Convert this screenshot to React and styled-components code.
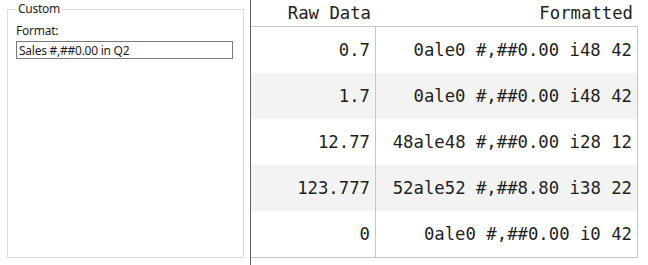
import React from 'react'
import styled, { createGlobalStyle } from 'styled-components'

const GlobalStyle = createGlobalStyle`
  html, body {
    margin: 0;
    padding: 0;
    background: #fff;
  }
  body {
    font-family: "Noto Sans", "Liberation Sans", sans-serif;
    color: #1e1e1e;
  }
`

const _Window = styled.div`
  display: flex;
  width: 648px;
  height: 265px;
  overflow: hidden;
`

const _Side = styled.div`
  display: flex;
  width: 250px;
  padding: 2px 6px 7px 7px;
  box-sizing: border-box;
`

const _Group = styled.fieldset`
  flex: 1;
  margin: 0;
  padding: 7px 8px 0;
  border: 1px solid #dcdcdc;
  min-width: 0;
  display: flex;
  flex-direction: column;
  align-items: flex-start;
`

const _Legend = styled.legend`
  padding: 0 2px;
  font-size: 12px;
  letter-spacing: -0.25px;
  line-height: 14px;
  color: #1e1e1e;
`

const _Label = styled.label`
  font-size: 12px;
  letter-spacing: -0.25px;
  line-height: 15px;
`

const _Input = styled.input`
  margin-top: 3px;
  width: 217px;
  height: 18px;
  box-sizing: border-box;
  border: 1px solid #7a7a7a;
  padding: 0 2px;
  font-family: "Noto Sans", "Liberation Sans", sans-serif;
  font-size: 12px;
  letter-spacing: -0.25px;
  color: #1e1e1e;
  outline: 0;
`

const _Main = styled.div`
  flex: 1;
  border-left: 1px solid #646464;
  padding-right: 10px;
`

const Row = styled.div`
  display: flex;
  height: ${props => props.height}px;
  background: ${props => (props.striped ? '#f3f3f3' : '#fff')};
`

const _Table = styled.div`
  border-top: 1px solid #c6c6c6;
  border-bottom: 1px solid #c6c6c6;
  border-right: 1px solid #c6c6c6;
`

const Cell = styled.div`
  display: flex;
  align-items: center;
  justify-content: flex-end;
  box-sizing: border-box;
  width: ${props => props.width}px;
  padding-right: 5px;
  border-right: ${props => (props.divider ? '1px solid #c6c6c6' : '0')};
  font-family: "DejaVu Sans Mono", "Liberation Mono", monospace;
  font-size: 17.3px;
  white-space: pre;
`

const rows = [
  { raw: '0.7', formatted: '0ale0 #,##0.00 i48 42' },
  { raw: '1.7', formatted: '0ale0 #,##0.00 i48 42' },
  { raw: '12.77', formatted: '48ale48 #,##0.00 i28 12' },
  { raw: '123.777', formatted: '52ale52 #,##8.80 i38 22' },
  { raw: '0', formatted: '0ale0 #,##0.00 i0 42' }
]

const App = () => (
  <>
    <GlobalStyle />
    <_Window>
      <_Side>
        <_Group>
          <_Legend>Custom</_Legend>
          <_Label htmlFor='fmt'>Format:</_Label>
          <_Input id='fmt' defaultValue='Sales #,##0.00 in Q2' />
        </_Group>
      </_Side>
      <_Main>
        <Row height={26}>
          <Cell width={125}>Raw Data</Cell>
          <Cell width={262}>Formatted</Cell>
        </Row>
        <_Table>
          {rows.map((r, i) => (
            <Row key={i} height={46} striped={i % 2 === 1}>
              <Cell width={125} divider>{r.raw}</Cell>
              <Cell width={261}>{r.formatted}</Cell>
            </Row>
          ))}
        </_Table>
      </_Main>
    </_Window>
  </>
)

export default App
